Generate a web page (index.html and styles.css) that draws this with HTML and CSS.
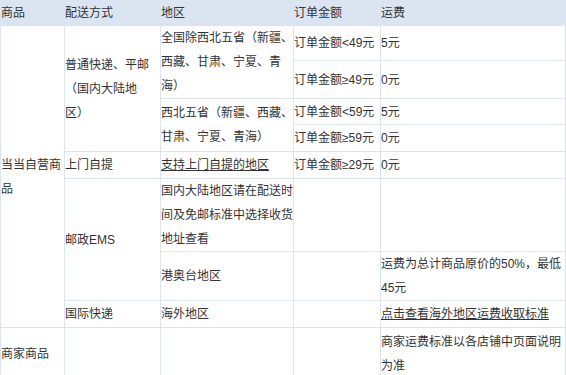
FILE: index.html
```html
<!DOCTYPE html>
<html lang="zh-CN">
<head>
<meta charset="utf-8">
<title>运费说明</title>
<link rel="stylesheet" href="styles.css">
</head>
<body>
<table class="fee">
  <colgroup>
    <col class="c1"><col class="c2"><col class="c3"><col class="c4"><col class="c5">
  </colgroup>
  <thead>
    <tr class="head">
      <th>商品</th><th>配送方式</th><th>地区</th><th>订单金额</th><th>运费</th>
    </tr>
  </thead>
  <tbody>
    <tr class="r1">
      <td rowspan="8">当当自营商品</td>
      <td rowspan="4">普通快递、平邮（国内大陆地区）</td>
      <td rowspan="2">全国除西北五省（新疆、西藏、甘肃、宁夏、青海）</td>
      <td>订单金额&lt;49元</td>
      <td>5元</td>
    </tr>
    <tr class="r2">
      <td>订单金额≥49元</td>
      <td>0元</td>
    </tr>
    <tr class="r3">
      <td rowspan="2">西北五省（新疆、西藏、甘肃、宁夏、青海）</td>
      <td>订单金额&lt;59元</td>
      <td>5元</td>
    </tr>
    <tr class="r4">
      <td>订单金额≥59元</td>
      <td>0元</td>
    </tr>
    <tr class="r5">
      <td>上门自提</td>
      <td><a href="#">支持上门自提的地区</a></td>
      <td>订单金额≥29元</td>
      <td>0元</td>
    </tr>
    <tr class="r6">
      <td rowspan="2">邮政EMS</td>
      <td>国内大陆地区请在配送时间及免邮标准中选择收货地址查看</td>
      <td></td>
      <td></td>
    </tr>
    <tr class="r7">
      <td>港奥台地区</td>
      <td></td>
      <td>运费为总计商品原价的50%，最低45元</td>
    </tr>
    <tr class="r8">
      <td>国际快递</td>
      <td>海外地区</td>
      <td></td>
      <td><a href="#">点击查看海外地区运费收取标准</a></td>
    </tr>
    <tr class="r9">
      <td>商家商品</td>
      <td></td>
      <td></td>
      <td></td>
      <td>商家运费标准以各店铺中页面说明为准</td>
    </tr>
  </tbody>
</table>
</body>
</html>
```

FILE: styles.css
```css
html, body {
  margin: 0;
  padding: 0;
  background: #ffffff;
}

.fee {
  border-collapse: collapse;
  table-layout: fixed;
  width: 565px;
  font-family: "Liberation Sans", "Noto Sans CJK SC", sans-serif;
  font-size: 12px;
  line-height: 24px;
  color: #333333;
  text-spacing-trim: space-all;
}

.c1 { width: 64px; }
.c2 { width: 96px; }
.c3 { width: 133px; }
.c4 { width: 87px; }
.c5 { width: 185px; }

.fee th,
.fee td {
  border: 1px solid #dbe5f1;
  padding: 0;
  text-align: left;
  vertical-align: middle;
  font-weight: normal;
}

.fee th {
  background: #dbe5f1;
}

.fee a {
  color: #333333;
  text-decoration: underline;
}

.head { height: 25px; }
.r1 { height: 35px; }
.r2 { height: 38px; }
.r3 { height: 26px; }
.r4 { height: 27px; }
.r5 { height: 27px; }
.r6 { height: 73px; }
.r7 { height: 49px; }
.r8 { height: 27px; }
.r9 { height: 52px; }
```
